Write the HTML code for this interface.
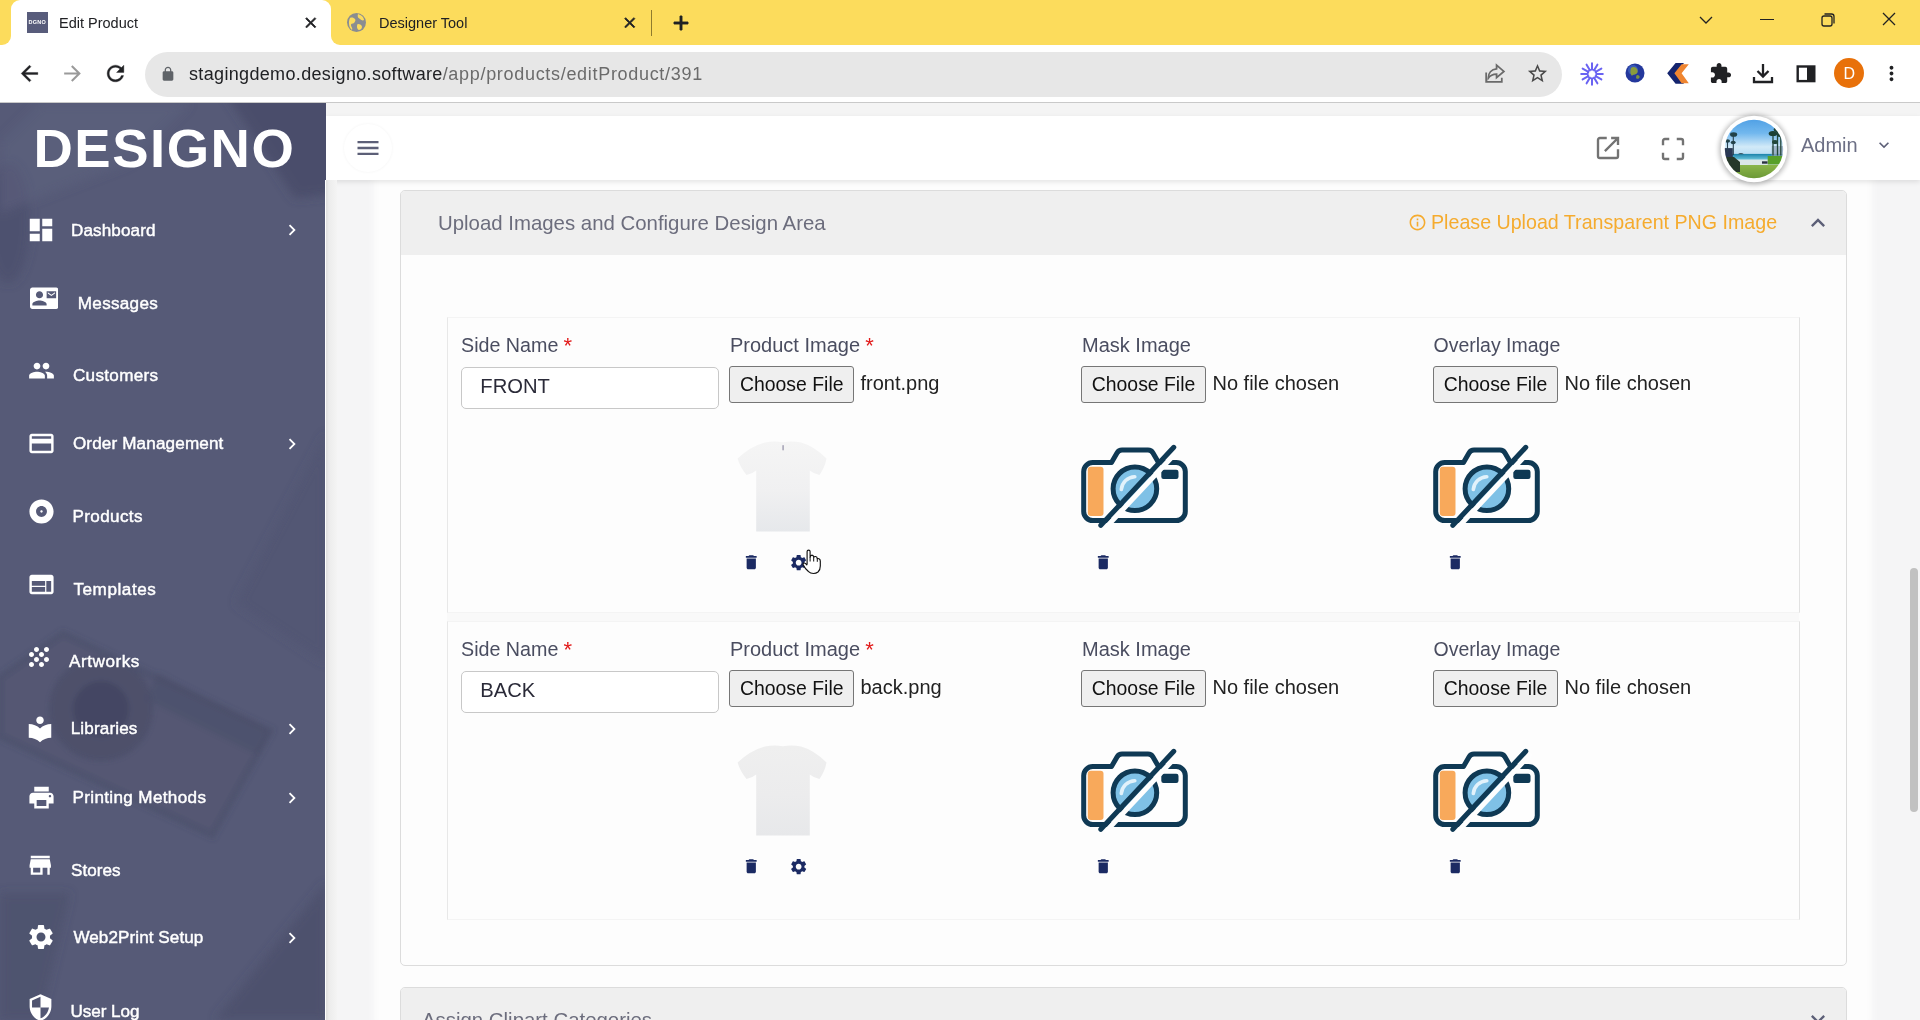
<!DOCTYPE html>
<html lang="en">
<head>
<meta charset="utf-8">
<title>Edit Product</title>
<style>
*{box-sizing:border-box;margin:0;padding:0}
html,body{width:1920px;height:1020px;overflow:hidden;background:#f5f5f6;font-family:"Liberation Sans",sans-serif;}
.abs{position:absolute}
#root{position:relative;width:1920px;height:1020px;overflow:hidden;will-change:transform}
#tabstrip{left:0;top:0;width:1920px;height:45px;background:#fcdc5c}
#toolbar{left:0;top:45px;width:1920px;height:57px;background:#fff}
#chromeline{left:0;top:102px;width:1920px;height:1px;background:#c9c9c9}
#omni{left:145px;top:51.500px;width:1417px;height:45px;border-radius:22.500px;background:#e7e7e7}
#tab1{left:11px;top:0;width:320px;height:45px;background:#fff;border-radius:9px 9px 0 0}
.tcurve{width:9px;height:9px;top:36px;background:#fff}
.tcurve i{position:absolute;left:0;top:0;width:9px;height:9px;background:#fcdc5c;display:block}
.t{position:absolute;white-space:nowrap}
#sidebar{left:0;top:103px;width:326px;height:917px;background:#565a77;overflow:hidden}
#sbshadow{left:325px;top:180px;width:12px;height:840px;background:linear-gradient(90deg,#fff 0,#fff 1px,#dedede 1px,#ececec 4px,#f4f4f4 12px)}
#strip{left:326px;top:103px;width:1594px;height:13px;background:#f4f4f4}
#header{left:326px;top:116px;width:1594px;height:64px;background:#fff;box-shadow:0 2px 5px rgba(0,0,0,.10)}
#card{left:380px;top:180px;width:1486px;height:840px;background:#fdfdfd;box-shadow:0 0 7px 6px #fdfdfd}
.panel{border:1px solid #dcdcdc;border-radius:5px;background:#fdfdfd;overflow:hidden}
.phead{background:#efefef;left:0;top:0;width:100%}
.fbtn{background:#efefef;border:1px solid #767676;border-radius:3px;height:37px;width:124px}
.inp{border:1px solid #c8c8c8;border-radius:5px;background:#fff;height:42px;width:258px}
.siderow{border:1px solid #f4f4f4;border-right-color:#e2e2e2;border-left-color:#e8e8e8;background:#fdfdfd}
</style>
</head>
<body>
<div id="root">

<div id="tabstrip" class="abs"></div>
<div id="toolbar" class="abs"></div>
<div id="tab1" class="abs"></div>
<div class="abs tcurve" style="left:2px"><i style="border-radius:0 0 9px 0"></i></div>
<div class="abs tcurve" style="left:331px"><i style="border-radius:0 0 0 9px"></i></div>
<div id="chromeline" class="abs"></div>
<div id="omni" class="abs"></div>
<div class="abs" style="left:27px;top:12px;width:21px;height:21px;background:#585c7b"></div>
<div class="t" style="left:28.5px;top:18.5px;font-size:5.5px;line-height:7px;color:#fff;font-weight:bold;letter-spacing:0.3px;">DGNO</div>
<div class="t" style="left:59px;top:14.7px;font-size:14.5px;line-height:17px;color:#202124;font-weight:normal;letter-spacing:0px;">Edit Product</div>
<svg class="abs" style="left:301.8px;top:13.8px" width="17.5" height="17.5" viewBox="0 0 24 24"><path fill="#202124" d="M19 6.41L17.59 5 12 10.59 6.41 5 5 6.41 10.59 12 5 17.59 6.41 19 12 13.41 17.59 19 19 17.59 13.41 12z" stroke="#202124" stroke-width="1"/></svg>
<svg class="abs" style="left:346px;top:12px" width="21" height="21" viewBox="0 0 21 21"><circle cx="10.5" cy="10.5" r="9.5" fill="#8a8d91"/><path d="M4 6c2-1 4 0 5 1s0 3-1 4-3 0-3 2 2 3 1 5c-3-2-4-8-2-12zM12 2c3 1 6 3 6 6-1 1-3 0-4-1s-3-1-2-5zM12 12c2 0 4 1 4 3s-2 3-3 3-2-2-2-3 0-3 1-3z" fill="#fcdc5c"/></svg>
<div class="t" style="left:379px;top:14.7px;font-size:14.5px;line-height:17px;color:#202124;font-weight:normal;letter-spacing:0px;">Designer Tool</div>
<svg class="abs" style="left:621.2px;top:13.8px" width="17.5" height="17.5" viewBox="0 0 24 24"><path fill="#202124" d="M19 6.41L17.59 5 12 10.59 6.41 5 5 6.41 10.59 12 5 17.59 6.41 19 12 13.41 17.59 19 19 17.59 13.41 12z" stroke="#202124" stroke-width="1"/></svg>
<div class="abs" style="left:651px;top:10px;width:1px;height:26px;background:#8f7b2d"></div>
<svg class="abs" style="left:669.0px;top:10.5px" width="24" height="24" viewBox="0 0 24 24"><path fill="#202124" d="M19 13h-6v6h-2v-6H5v-2h6V5h2v6h6v2z" stroke="#202124" stroke-width=".9"/></svg>
<svg class="abs" style="left:1696px;top:10px" width="20" height="20" viewBox="0 0 20 20" fill="none" stroke="#222" stroke-width="1.3"><path d="M4 7l6 6 6-6"/></svg>
<div class="abs" style="left:1760px;top:19px;width:14px;height:1.3px;background:#222"></div>
<svg class="abs" style="left:1818px;top:10px" width="20" height="20" viewBox="0 0 20 20" fill="none" stroke="#222" stroke-width="1.3"><rect x="4" y="6" width="10" height="10" rx="2"/><path d="M6.500 4h7a2.500 2.500 0 0 1 2.500 2.500v7"/></svg>
<svg class="abs" style="left:1879px;top:9px" width="20" height="20" viewBox="0 0 20 20" fill="none" stroke="#222" stroke-width="1.3"><path d="M4 4l12 12M16 4L4 16"/></svg>
<svg class="abs" style="left:16.5px;top:60.5px" width="25" height="25" viewBox="0 0 24 24"><path fill="#202124" d="M20 11H7.83l5.59-5.59L12 4l-8 8 8 8 1.41-1.41L7.83 13H20v-2z" stroke="#202124" stroke-width=".35"/></svg>
<svg class="abs" style="left:59.5px;top:60.5px" width="25" height="25" viewBox="0 0 24 24"><path fill="#9a9a9a" d="M12 4l-1.41 1.41L16.17 11H4v2h12.17l-5.58 5.59L12 20l8-8z" /></svg>
<svg class="abs" style="left:102.5px;top:60.5px" width="25" height="25" viewBox="0 0 24 24"><path fill="#202124" d="M17.65 6.35C16.2 4.9 14.21 4 12 4c-4.42 0-7.99 3.58-7.99 8s3.57 8 7.99 8c3.73 0 6.84-2.55 7.73-6h-2.08c-.82 2.33-3.04 4-5.65 4-3.31 0-6-2.69-6-6s2.69-6 6-6c1.66 0 3.14.69 4.22 1.78L13 11h7V4l-2.35 2.35z" stroke="#202124" stroke-width=".35"/></svg>
<svg class="abs" style="left:160.0px;top:66.0px" width="16" height="16" viewBox="0 0 24 24"><path fill="#5f6368" d="M18 8h-1V6c0-2.76-2.24-5-5-5S7 3.240 7 6v2H6c-1.100 0-2 .9-2 2v10c0 1.100.9 2 2 2h12c1.100 0 2-.9 2-2V10c0-1.100-.9-2-2-2zm-2.900 0H8.900V6c0-1.710 1.390-3.100 3.100-3.100 1.710 0 3.100 1.390 3.100 3.100v2z" /></svg>
<div class="t" style="left:189px;top:63.200px;font-size:18px;line-height:22px;color:#202124;letter-spacing:0.340px">stagingdemo.designo.software<span style="color:#6b6b6b;letter-spacing:0.690px">/app/products/editProduct/391</span></div>
<svg class="abs" style="left:1482px;top:61px" width="25" height="25" viewBox="0 0 24 24" fill="none" stroke="#6a6a6a" stroke-width="1.700"><path d="M4 11v9h15v-4"/><path d="M14 4l7 6-7 6v-3.500c-4 0-6 1-8 4 0-5 3-8.500 8-9z"/></svg>
<svg class="abs" style="left:1525.5px;top:61.5px" width="23" height="23" viewBox="0 0 24 24"><path fill="#4a4a4a" d="M22 9.24l-7.19-.62L12 2 9.19 8.63 2 9.24l5.46 4.73L5.82 21 12 17.27 18.18 21l-1.63-7.03L22 9.24zM12 15.4l-3.76 2.27 1-4.28-3.32-2.88 4.38-.38L12 6.1l1.71 4.04 4.38.38-3.32 2.88 1 4.28L12 15.4z" /></svg>
<svg class="abs" style="left:1580px;top:61.500px" width="24" height="24" viewBox="0 0 24 24"><path d="M16.20 12.00L22.80 12.00M15.64 14.10L21.35 17.40M14.10 15.64L17.40 21.35M12.00 16.20L12.00 22.80M9.90 15.64L6.60 21.35M8.36 14.10L2.65 17.40M7.80 12.00L1.20 12.00M8.36 9.90L2.65 6.60M9.90 8.36L6.60 2.65M12.00 7.80L12.00 1.20M14.10 8.36L17.40 2.65M15.64 9.90L21.35 6.60" stroke="#6a63f2" stroke-width="2" stroke-linecap="round" fill="none"/><circle cx="12" cy="12" r="4.600" fill="none" stroke="#6a63f2" stroke-width="1.400"/></svg>
<svg class="abs" style="left:1625px;top:63px" width="20" height="20" viewBox="0 0 20 20"><circle cx="10" cy="10" r="9.500" fill="#24389c"/><circle cx="8" cy="7" r="5" fill="#4a78d0" opacity=".55"/><path d="M6 5c2-2 5-1 6 1s1 4-1 5-3 0-4 2c-2-2-2-5-1-8z" fill="#8a9c3c"/><path d="M12 12c2 0 3 1 2.500 2.500s-2 1.500-3 1 0-3.500 .5-3.500z" fill="#7d9440"/></svg>
<svg class="abs" style="left:1666px;top:62px" width="24" height="23" viewBox="0 0 24 23"><path d="M1.200 11.300L9.600 1H18L9.600 11.300 18 21.800H9.600z" fill="#14246e"/><path d="M8.400 11.300L15.600 2.200H22.800L15.600 11.300 22.800 21.300H15.600z" fill="#ef8530"/></svg>
<svg class="abs" style="left:1708.5px;top:61.5px" width="23" height="23" viewBox="0 0 24 24"><path fill="#202124" d="M20.5 11H19V7c0-1.1-.9-2-2-2h-4V3.5C13 2.12 11.88 1 10.5 1S8 2.12 8 3.5V5H4c-1.1 0-1.99.9-1.99 2v3.8H3.5c1.49 0 2.7 1.21 2.7 2.7s-1.21 2.7-2.7 2.7H2V20c0 1.1.9 2 2 2h3.8v-1.5c0-1.49 1.21-2.7 2.7-2.7 1.49 0 2.7 1.21 2.7 2.7V22H17c1.1 0 2-.9 2-2v-4h1.5c1.38 0 2.5-1.12 2.5-2.5S21.88 11 20.5 11z" /></svg>
<svg class="abs" style="left:1751px;top:61px" width="24" height="24" viewBox="0 0 24 24" fill="none" stroke="#202124" stroke-width="2.300"><path d="M12 3v12M6.500 10l5.500 5.500 5.500-5.500M3 16v5h18v-5"/></svg>
<svg class="abs" style="left:1796px;top:65px" width="20" height="18" viewBox="0 0 20 18"><rect x="1.700" y="1.500" width="16.600" height="14.600" fill="#fff" stroke="#202124" stroke-width="2.400"/><rect x="11" y="1" width="8" height="16" fill="#202124"/></svg>
<div class="abs" style="left:1834px;top:58px;width:30px;height:30px;border-radius:50%;background:#e8710a"></div>
<div class="t" style="left:1843.5px;top:64.0px;font-size:16px;line-height:19px;color:#fff;font-weight:normal;letter-spacing:0px;">D</div>
<svg class="abs" style="left:1879.5px;top:61.5px" width="23" height="23" viewBox="0 0 24 24"><path fill="#202124" d="M12 8c1.1 0 2-.9 2-2s-.9-2-2-2-2 .9-2 2 .9 2 2 2zm0 2c-1.1 0-2 .9-2 2s.9 2 2 2 2-.9 2-2-.9-2-2-2zm0 6c-1.1 0-2 .9-2 2s.9 2 2 2 2-.9 2-2-.9-2-2-2z" /></svg>
<div id="strip" class="abs"></div>
<div id="card" class="abs"></div>
<div class="abs panel" style="left:400px;top:190px;width:1447px;height:776px"><div class="abs phead" style="height:64px"></div></div>
<div class="t" style="left:438px;top:210.5px;font-size:20.4px;line-height:24px;color:#6c6d7d;font-weight:normal;letter-spacing:0px;">Upload Images and Configure Design Area</div>
<svg class="abs" style="left:1408.0px;top:212.5px" width="19" height="19" viewBox="0 0 24 24"><path fill="#f5ab2e" d="M11 17h2v-6h-2v6zm1-15C6.48 2 2 6.48 2 12s4.48 10 10 10 10-4.48 10-10S17.52 2 12 2zm0 18c-4.41 0-8-3.59-8-8s3.59-8 8-8 8 3.590 8 8-3.590 8-8 8zM11 9h2V7h-2v2z" /></svg>
<div class="t" style="left:1431px;top:210.0px;font-size:19.65px;line-height:24px;color:#f5ab2e;font-weight:normal;letter-spacing:0px;">Please Upload Transparent PNG Image</div>
<svg class="abs" style="left:1804.0px;top:209.0px" width="28" height="28" viewBox="0 0 24 24"><path fill="#5c5f77" d="M12 8l-6 6 1.41 1.41L12 10.83l4.59 4.58L18 14z" /></svg>
<div class="abs" style="left:447px;top:613px;width:1352px;height:8px;background:#f9f9f9"></div>
<div class="abs siderow" style="left:446.500px;top:317px;width:1353.500px;height:296px"></div>
<div class="t" style="left:461px;top:333.0px;font-size:19.7px;line-height:24px;color:#4a4d60;font-weight:normal;letter-spacing:0px;">Side Name</div>
<div class="t" style="left:563.6px;top:333.3px;font-size:22px;line-height:26px;color:#e21b1b;font-weight:normal;letter-spacing:0px;">*</div>
<div class="abs inp" style="left:461px;top:367px"></div>
<div class="t" style="left:480.3px;top:374.0px;font-size:20.2px;line-height:24px;color:#2a2a38;font-weight:normal;letter-spacing:0px;">FRONT</div>
<div class="t" style="left:730px;top:333.0px;font-size:20px;line-height:24px;color:#4a4d60;font-weight:normal;letter-spacing:0px;">Product Image</div>
<div class="t" style="left:865.2px;top:333.3px;font-size:22px;line-height:26px;color:#e21b1b;font-weight:normal;letter-spacing:0px;">*</div>
<div class="abs fbtn" style="left:729.3px;top:366px;width:124.700px"></div>
<div class="t" style="left:740px;top:372.5px;font-size:19.4px;line-height:23px;color:#111;font-weight:normal;letter-spacing:0px;">Choose File</div>
<div class="t" style="left:860.5px;top:370.7px;font-size:20px;line-height:24px;color:#222;font-weight:normal;letter-spacing:0px;">front.png</div>
<div class="abs fbtn" style="left:1081.1px;top:366px;width:124.700px"></div>
<div class="t" style="left:1091.8px;top:372.5px;font-size:19.4px;line-height:23px;color:#111;font-weight:normal;letter-spacing:0px;">Choose File</div>
<div class="t" style="left:1212.5px;top:370.7px;font-size:20px;line-height:24px;color:#222;font-weight:normal;letter-spacing:0px;">No file chosen</div>
<div class="abs fbtn" style="left:1433.1px;top:366px;width:124.700px"></div>
<div class="t" style="left:1443.8px;top:372.5px;font-size:19.4px;line-height:23px;color:#111;font-weight:normal;letter-spacing:0px;">Choose File</div>
<div class="t" style="left:1564.5px;top:370.7px;font-size:20px;line-height:24px;color:#222;font-weight:normal;letter-spacing:0px;">No file chosen</div>
<div class="t" style="left:1082px;top:333.0px;font-size:20px;line-height:24px;color:#4a4d60;font-weight:normal;letter-spacing:0px;">Mask Image</div>
<div class="t" style="left:1433.5px;top:333.5px;font-size:19.5px;line-height:23px;color:#4a4d60;font-weight:normal;letter-spacing:0px;">Overlay Image</div>
<svg class="abs" style="left:734px;top:438px" width="96" height="98" viewBox="0 0 96 98">
<defs><linearGradient id="tg0" x1="0" y1="0" x2="0" y2="1"><stop offset="0" stop-color="#f5f5f5"/><stop offset=".55" stop-color="#f0f0f1"/><stop offset="1" stop-color="#e6e8eb"/></linearGradient></defs>
<path d="M31 4.500Q40 2.500 49 4.200Q58 2.500 67 4.500Q80 8 92.500 20.500Q91 29 85.500 37Q80 36 75.800 32.500L75.800 93.500H22.200V32.500Q18 36 12.500 37Q6 29 3.600 20.500Q17 8 31 4.500z" fill="url(#tg0)"/>
<rect x="48.300" y="7" width="1.600" height="5.500" rx=".8" fill="#a9a6b8"/>
</svg>
<svg class="abs" style="left:1081px;top:443px" width="108" height="86" viewBox="0 0 108 86">
<path d="M11.700 19.600H30.500L36 10Q37.700 7.100 41 7.100H67Q70.300 7.100 72 10L77.500 19.600H95.300a9 9 0 0 1 9 9V68.500a9 9 0 0 1-9 9H11.700a9 9 0 0 1-9-9V28.600a9 9 0 0 1 9-9z" fill="#fefefe" stroke="#0f3954" stroke-width="5" stroke-linejoin="round"/>
<rect x="6.800" y="23.800" width="15.700" height="49.200" rx="3" fill="#f8a95b"/>
<circle cx="53.900" cy="45.800" r="21.800" fill="#7fc1e6" stroke="#0f3954" stroke-width="5"/>
<path d="M40.300 46.500a14 14 0 0 1 13.500-12.800" fill="none" stroke="#e2f2fb" stroke-width="3.600" stroke-linecap="round"/>
<rect x="80.300" y="26.700" width="17.200" height="9.300" rx="2.200" fill="#0f3954"/>
<path d="M24 85.500L98 6.500" stroke="#fefefe" stroke-width="5"/>
<path d="M19.800 82.300L92.800 4.300" stroke="#0f3954" stroke-width="5" stroke-linecap="round"/>
</svg>
<svg class="abs" style="left:1433px;top:443px" width="108" height="86" viewBox="0 0 108 86">
<path d="M11.700 19.600H30.500L36 10Q37.700 7.100 41 7.100H67Q70.300 7.100 72 10L77.500 19.600H95.300a9 9 0 0 1 9 9V68.500a9 9 0 0 1-9 9H11.700a9 9 0 0 1-9-9V28.600a9 9 0 0 1 9-9z" fill="#fefefe" stroke="#0f3954" stroke-width="5" stroke-linejoin="round"/>
<rect x="6.800" y="23.800" width="15.700" height="49.200" rx="3" fill="#f8a95b"/>
<circle cx="53.900" cy="45.800" r="21.800" fill="#7fc1e6" stroke="#0f3954" stroke-width="5"/>
<path d="M40.300 46.500a14 14 0 0 1 13.500-12.800" fill="none" stroke="#e2f2fb" stroke-width="3.600" stroke-linecap="round"/>
<rect x="80.300" y="26.700" width="17.200" height="9.300" rx="2.200" fill="#0f3954"/>
<path d="M24 85.500L98 6.500" stroke="#fefefe" stroke-width="5"/>
<path d="M19.800 82.300L92.800 4.300" stroke="#0f3954" stroke-width="5" stroke-linecap="round"/>
</svg>
<svg class="abs" style="left:741.6px;top:552.5px" width="18.5" height="18.5" viewBox="0 0 24 24"><path fill="#1b2a63" d="M6 19c0 1.1.9 2 2 2h8c1.1 0 2-.9 2-2V7H6v12zM19 4h-3.5l-1-1h-5l-1 1H5v2h14V4z" /></svg>
<svg class="abs" style="left:1093.8px;top:552.5px" width="18.5" height="18.5" viewBox="0 0 24 24"><path fill="#1b2a63" d="M6 19c0 1.1.9 2 2 2h8c1.1 0 2-.9 2-2V7H6v12zM19 4h-3.5l-1-1h-5l-1 1H5v2h14V4z" /></svg>
<svg class="abs" style="left:1445.8px;top:552.5px" width="18.5" height="18.5" viewBox="0 0 24 24"><path fill="#1b2a63" d="M6 19c0 1.1.9 2 2 2h8c1.1 0 2-.9 2-2V7H6v12zM19 4h-3.5l-1-1h-5l-1 1H5v2h14V4z" /></svg>
<svg class="abs" style="left:788.9px;top:552.6px" width="19.3" height="19.3" viewBox="0 0 24 24"><path fill="#1b2a63" d="M19.14 12.94c.04-.3.06-.61.06-.94 0-.32-.02-.64-.07-.94l2.03-1.58c.18-.14.23-.41.12-.61l-1.92-3.32c-.12-.22-.37-.29-.59-.22l-2.39.96c-.5-.38-1.03-.7-1.62-.94l-.36-2.54c-.04-.24-.24-.41-.48-.41h-3.84c-.24 0-.43.17-.47.41l-.36 2.54c-.59.24-1.13.57-1.62.94l-2.39-.96c-.22-.08-.47 0-.59.22L2.74 8.87c-.12.21-.08.47.12.61l2.03 1.58c-.05.3-.09.63-.09.94s.02.64.07.94l-2.03 1.58c-.18.14-.23.41-.12.61l1.92 3.32c.12.22.37.29.59.22l2.39-.96c.5.38 1.03.7 1.62.94l.36 2.54c.05.24.24.41.48.41h3.84c.24 0 .44-.17.47-.41l.36-2.54c.59-.24 1.13-.56 1.62-.94l2.39.96c.22.08.47 0 .59-.22l1.92-3.32c.12-.22.07-.47-.12-.61l-2.01-1.58zM12 15.6c-1.98 0-3.6-1.62-3.6-3.6s1.62-3.6 3.6-3.6 3.6 1.62 3.6 3.6-1.62 3.6-3.6 3.6z" /></svg>
<div class="abs siderow" style="left:446.500px;top:621px;width:1353.500px;height:299px"></div>
<div class="t" style="left:461px;top:637.0px;font-size:19.7px;line-height:24px;color:#4a4d60;font-weight:normal;letter-spacing:0px;">Side Name</div>
<div class="t" style="left:563.6px;top:637.3px;font-size:22px;line-height:26px;color:#e21b1b;font-weight:normal;letter-spacing:0px;">*</div>
<div class="abs inp" style="left:461px;top:671px"></div>
<div class="t" style="left:480.3px;top:678.0px;font-size:20.2px;line-height:24px;color:#2a2a38;font-weight:normal;letter-spacing:0px;">BACK</div>
<div class="t" style="left:730px;top:637.0px;font-size:20px;line-height:24px;color:#4a4d60;font-weight:normal;letter-spacing:0px;">Product Image</div>
<div class="t" style="left:865.2px;top:637.3px;font-size:22px;line-height:26px;color:#e21b1b;font-weight:normal;letter-spacing:0px;">*</div>
<div class="abs fbtn" style="left:729.3px;top:670px;width:124.700px"></div>
<div class="t" style="left:740px;top:676.5px;font-size:19.4px;line-height:23px;color:#111;font-weight:normal;letter-spacing:0px;">Choose File</div>
<div class="t" style="left:860.5px;top:674.7px;font-size:20px;line-height:24px;color:#222;font-weight:normal;letter-spacing:0px;">back.png</div>
<div class="abs fbtn" style="left:1081.1px;top:670px;width:124.700px"></div>
<div class="t" style="left:1091.8px;top:676.5px;font-size:19.4px;line-height:23px;color:#111;font-weight:normal;letter-spacing:0px;">Choose File</div>
<div class="t" style="left:1212.5px;top:674.7px;font-size:20px;line-height:24px;color:#222;font-weight:normal;letter-spacing:0px;">No file chosen</div>
<div class="abs fbtn" style="left:1433.1px;top:670px;width:124.700px"></div>
<div class="t" style="left:1443.8px;top:676.5px;font-size:19.4px;line-height:23px;color:#111;font-weight:normal;letter-spacing:0px;">Choose File</div>
<div class="t" style="left:1564.5px;top:674.7px;font-size:20px;line-height:24px;color:#222;font-weight:normal;letter-spacing:0px;">No file chosen</div>
<div class="t" style="left:1082px;top:637.0px;font-size:20px;line-height:24px;color:#4a4d60;font-weight:normal;letter-spacing:0px;">Mask Image</div>
<div class="t" style="left:1433.5px;top:637.5px;font-size:19.5px;line-height:23px;color:#4a4d60;font-weight:normal;letter-spacing:0px;">Overlay Image</div>
<svg class="abs" style="left:734px;top:742px" width="96" height="98" viewBox="0 0 96 98">
<defs><linearGradient id="tg304" x1="0" y1="0" x2="0" y2="1"><stop offset="0" stop-color="#efefef"/><stop offset=".55" stop-color="#ececed"/><stop offset="1" stop-color="#e7e8ea"/></linearGradient></defs>
<path d="M31 4.500Q40 2.500 49 4.200Q58 2.500 67 4.500Q80 8 92.500 20.500Q91 29 85.500 37Q80 36 75.800 32.500L75.800 93.500H22.200V32.500Q18 36 12.500 37Q6 29 3.600 20.500Q17 8 31 4.500z" fill="url(#tg304)"/>

</svg>
<svg class="abs" style="left:1081px;top:747px" width="108" height="86" viewBox="0 0 108 86">
<path d="M11.700 19.600H30.500L36 10Q37.700 7.100 41 7.100H67Q70.300 7.100 72 10L77.500 19.600H95.300a9 9 0 0 1 9 9V68.500a9 9 0 0 1-9 9H11.700a9 9 0 0 1-9-9V28.600a9 9 0 0 1 9-9z" fill="#fefefe" stroke="#0f3954" stroke-width="5" stroke-linejoin="round"/>
<rect x="6.800" y="23.800" width="15.700" height="49.200" rx="3" fill="#f8a95b"/>
<circle cx="53.900" cy="45.800" r="21.800" fill="#7fc1e6" stroke="#0f3954" stroke-width="5"/>
<path d="M40.300 46.500a14 14 0 0 1 13.500-12.800" fill="none" stroke="#e2f2fb" stroke-width="3.600" stroke-linecap="round"/>
<rect x="80.300" y="26.700" width="17.200" height="9.300" rx="2.200" fill="#0f3954"/>
<path d="M24 85.500L98 6.500" stroke="#fefefe" stroke-width="5"/>
<path d="M19.800 82.300L92.800 4.300" stroke="#0f3954" stroke-width="5" stroke-linecap="round"/>
</svg>
<svg class="abs" style="left:1433px;top:747px" width="108" height="86" viewBox="0 0 108 86">
<path d="M11.700 19.600H30.500L36 10Q37.700 7.100 41 7.100H67Q70.300 7.100 72 10L77.500 19.600H95.300a9 9 0 0 1 9 9V68.500a9 9 0 0 1-9 9H11.700a9 9 0 0 1-9-9V28.600a9 9 0 0 1 9-9z" fill="#fefefe" stroke="#0f3954" stroke-width="5" stroke-linejoin="round"/>
<rect x="6.800" y="23.800" width="15.700" height="49.200" rx="3" fill="#f8a95b"/>
<circle cx="53.900" cy="45.800" r="21.800" fill="#7fc1e6" stroke="#0f3954" stroke-width="5"/>
<path d="M40.300 46.500a14 14 0 0 1 13.500-12.800" fill="none" stroke="#e2f2fb" stroke-width="3.600" stroke-linecap="round"/>
<rect x="80.300" y="26.700" width="17.200" height="9.300" rx="2.200" fill="#0f3954"/>
<path d="M24 85.500L98 6.500" stroke="#fefefe" stroke-width="5"/>
<path d="M19.800 82.300L92.800 4.300" stroke="#0f3954" stroke-width="5" stroke-linecap="round"/>
</svg>
<svg class="abs" style="left:741.6px;top:856.5px" width="18.5" height="18.5" viewBox="0 0 24 24"><path fill="#1b2a63" d="M6 19c0 1.1.9 2 2 2h8c1.1 0 2-.9 2-2V7H6v12zM19 4h-3.5l-1-1h-5l-1 1H5v2h14V4z" /></svg>
<svg class="abs" style="left:1093.8px;top:856.5px" width="18.5" height="18.5" viewBox="0 0 24 24"><path fill="#1b2a63" d="M6 19c0 1.1.9 2 2 2h8c1.1 0 2-.9 2-2V7H6v12zM19 4h-3.5l-1-1h-5l-1 1H5v2h14V4z" /></svg>
<svg class="abs" style="left:1445.8px;top:856.5px" width="18.5" height="18.5" viewBox="0 0 24 24"><path fill="#1b2a63" d="M6 19c0 1.1.9 2 2 2h8c1.1 0 2-.9 2-2V7H6v12zM19 4h-3.5l-1-1h-5l-1 1H5v2h14V4z" /></svg>
<svg class="abs" style="left:788.9px;top:856.6px" width="19.3" height="19.3" viewBox="0 0 24 24"><path fill="#1b2a63" d="M19.14 12.94c.04-.3.06-.61.06-.94 0-.32-.02-.64-.07-.94l2.03-1.58c.18-.14.23-.41.12-.61l-1.92-3.32c-.12-.22-.37-.29-.59-.22l-2.39.96c-.5-.38-1.03-.7-1.62-.94l-.36-2.54c-.04-.24-.24-.41-.48-.41h-3.84c-.24 0-.43.17-.47.41l-.36 2.54c-.59.24-1.13.57-1.62.94l-2.39-.96c-.22-.08-.47 0-.59.22L2.74 8.87c-.12.21-.08.47.12.61l2.03 1.58c-.05.3-.09.63-.09.94s.02.64.07.94l-2.03 1.58c-.18.14-.23.41-.12.61l1.92 3.32c.12.22.37.29.59.22l2.39-.96c.5.38 1.03.7 1.62.94l.36 2.54c.05.24.24.41.48.41h3.84c.24 0 .44-.17.47-.41l.36-2.54c.59-.24 1.13-.56 1.62-.94l2.39.96c.22.08.47 0 .59-.22l1.92-3.32c.12-.22.07-.47-.12-.61l-2.01-1.58zM12 15.6c-1.98 0-3.6-1.62-3.6-3.6s1.62-3.6 3.6-3.6 3.6 1.62 3.6 3.6-1.62 3.6-3.6 3.6z" /></svg>
<svg class="abs" style="left:801.200px;top:549.400px" width="22" height="27" viewBox="0 0 22 27"><path d="M6.100 15V2.600a1.500 1.500 0 0 1 3 0V8.500Q9.300 6.200 11 6.100Q12.600 6.100 12.700 8.200Q13.100 7.400 14.500 7.500Q16.200 7.700 16.300 9.600Q16.900 9.300 18 9.700Q19.300 10.300 19.300 12V17Q19.300 21 17 23Q15 24.500 12.500 24.500Q9.500 24.500 7.200 22.300Q4 19.500 2.300 16Q1.600 14.300 3 14Q4.300 13.800 5.800 15.800z" fill="#fff" stroke="#111" stroke-width="1.150" stroke-linejoin="round"/><path d="M9.100 8.500V12.500M12.700 8.200V12.500M16.300 9.600V12.800" stroke="#111" stroke-width="1" fill="none"/></svg>
<div class="abs panel" style="left:400px;top:987px;width:1447px;height:80px"><div class="abs phead" style="height:64px"></div></div>
<div class="t" style="left:422px;top:1007.5px;font-size:20.4px;line-height:24px;color:#6c6d7d;font-weight:normal;letter-spacing:0px;">Assign Clipart Categories</div>
<svg class="abs" style="left:1804.0px;top:1005.0px" width="28" height="28" viewBox="0 0 24 24"><path fill="#5c5f77" d="M16.59 8.59L12 13.17 7.41 8.59 6 10l6 6 6-6z" /></svg>
<div id="header" class="abs"></div>
<div class="abs" style="left:344px;top:124px;width:48px;height:48px;border-radius:50%;background:#fff;box-shadow:0 0 3px rgba(0,0,0,.05)"></div>
<svg class="abs" style="left:354.0px;top:134.0px" width="28" height="28" viewBox="0 0 24 24"><path fill="#5c5f77" d="M3 18h18v-2H3v2zm0-5h18v-2H3v2zm0-7v2h18V6H3z" /></svg>
<svg class="abs" style="left:1593.300px;top:133.200px" width="30" height="30" viewBox="0 0 24 24" fill="none" stroke="#737373" stroke-width="1.900"><path d="M11 4H5.500a1.500 1.500 0 0 0-1.500 1.500v13a1.500 1.500 0 0 0 1.500 1.500h13a1.500 1.500 0 0 0 1.500-1.500V13M14.500 4H20v5.500M20 4L9.500 14.500"/></svg>
<svg class="abs" style="left:1658.300px;top:133.700px" width="30" height="30" viewBox="0 0 24 24" fill="none" stroke="#737373" stroke-width="1.900"><path d="M4 9V5.500A1.500 1.500 0 0 1 5.500 4H9M15 4h3.500A1.500 1.500 0 0 1 20 5.500V9M20 15v3.500a1.500 1.500 0 0 1-1.500 1.500H15M9 20H5.500A1.500 1.500 0 0 1 4 18.500V15"/></svg>
<svg class="abs" style="left:1717.100px;top:112.300px;overflow:visible" width="74" height="74" viewBox="0 0 74 74">
<defs><clipPath id="avc"><circle cx="37" cy="37" r="29.200"/></clipPath>
<linearGradient id="sky" x1="0" y1="0" x2="0" y2="1"><stop offset="0" stop-color="#3f94e0"/><stop offset=".5" stop-color="#72b8ee"/><stop offset=".82" stop-color="#d2eaf8"/><stop offset="1" stop-color="#b9ddf3"/></linearGradient>
<linearGradient id="sea" x1="0" y1="0" x2="0" y2="1"><stop offset="0" stop-color="#1b82aa"/><stop offset="1" stop-color="#70c8de"/></linearGradient>
<linearGradient id="lawn" x1="0" y1="0" x2="0" y2="1"><stop offset="0" stop-color="#8ab548"/><stop offset="1" stop-color="#5b882c"/></linearGradient>
<filter id="avb" x="-10%" y="-10%" width="120%" height="120%"><feGaussianBlur stdDeviation=".700"/></filter>
<filter id="avs" x="-20%" y="-20%" width="140%" height="140%"><feGaussianBlur stdDeviation="2.400"/></filter></defs>
<circle cx="37" cy="37.500" r="35" fill="#000" opacity=".26" filter="url(#avs)"/>
<circle cx="37" cy="37" r="33.200" fill="#fff"/>
<g clip-path="url(#avc)"><g filter="url(#avb)">
<rect x="0" y="0" width="74" height="42.500" fill="url(#sky)"/>
<rect x="0" y="41.900" width="74" height="6" fill="url(#sea)"/>
<rect x="0" y="47.600" width="74" height="6" fill="#dbe6e6"/>
<rect x="0" y="53" width="74" height="21" fill="url(#lawn)"/>
<rect x="54.700" y="34" width="12" height="10.500" fill="#8fa3b8" opacity=".75"/>
<rect x="50.700" y="44" width="20" height="8.500" fill="#58a02b"/>
<rect x="45" y="49.300" width="5.500" height="2.400" fill="#2a3340"/>
<path d="M56 20.500V43.500M60.500 17V43.500M63.800 22V43.500" stroke="#24463a" stroke-width="1.300"/>
<ellipse cx="56" cy="21.500" rx="4.300" ry="2.600" fill="#1f4034"/><ellipse cx="61" cy="17.500" rx="4.300" ry="2.600" fill="#1f4034"/><ellipse cx="64" cy="23" rx="3.500" ry="2.200" fill="#1f4034"/><ellipse cx="58" cy="30" rx="3" ry="2" fill="#24463a"/>
<rect x="7" y="36.100" width="8.800" height="10" fill="#2b3954"/>
<path d="M6 45h11l6 5v10H9z" fill="#26382a"/>
<path d="M16.300 22.500V43M10.500 29V40" stroke="#2a4150" stroke-width="1.100"/>
<ellipse cx="16.600" cy="22.500" rx="3.600" ry="2.300" fill="#23424a"/><ellipse cx="10.500" cy="29" rx="2.600" ry="1.800" fill="#23424a"/><ellipse cx="16.200" cy="30.500" rx="2.500" ry="1.700" fill="#23424a"/>
<path d="M20.800 42.200q3-2.400 6.200 0z" fill="#3b5560"/>
</g></g></svg>
<div class="t" style="left:1801px;top:133.0px;font-size:20px;line-height:24px;color:#6c6f85;font-weight:normal;letter-spacing:0px;">Admin</div>
<svg class="abs" style="left:1874.0px;top:134.5px" width="20" height="20" viewBox="0 0 24 24"><path fill="#5c5f77" d="M16.59 8.59L12 13.17 7.41 8.59 6 10l6 6 6-6z" /></svg>
<div id="sidebar" class="abs">
<svg class="abs" style="left:0;top:0" width="326" height="917" viewBox="0 0 326 917">
<defs><filter id="bl" x="-20%" y="-20%" width="140%" height="140%"><feGaussianBlur stdDeviation="5"/></filter><filter id="bl2" x="-20%" y="-20%" width="140%" height="140%"><feGaussianBlur stdDeviation="2.500"/></filter></defs>
<g filter="url(#bl)">
<path d="M225 -10h120v100l-50 5z" fill="#454967" opacity=".75"/>
<ellipse cx="8" cy="120" rx="22" ry="60" fill="#494d6a" opacity=".55"/>
<path d="M40 0h150l-60 60L0 110V40z" fill="#5d6180" opacity=".5"/>
<path d="M326 330v230l-90-60z" fill="#50546f" opacity=".5"/>
<path d="M0 790h70l-30 127H0z" fill="#454965" opacity=".4"/>
<path d="M326 780v137H215z" fill="#474b67" opacity=".6"/>
</g>
<g filter="url(#bl2)">
<path d="M63 531L270 628 212 732 0 633V575z" fill="#52566f" opacity=".45" stroke="#43475f" stroke-opacity=".7" stroke-width="7"/>
<path d="M158 570l112 58-12 24-112-56z" fill="#4a4e68" opacity=".5"/>
<circle cx="101" cy="606" r="52" fill="#4b4f6a" opacity=".75"/>
<circle cx="101" cy="606" r="28" fill="#414560" opacity=".7"/>
</g>
</svg>
</div>
<div id="sbshadow" class="abs"></div>
<div class="t" style="left:33.5px;top:115.8px;font-size:54.5px;line-height:65px;color:#fff;font-weight:bold;letter-spacing:1.5px;">DESIGNO</div>
<svg class="abs" style="left:25.6px;top:215.4px" width="30" height="30" viewBox="0 0 24 24"><path fill="#fff" d="M3 13h8V3H3v10zm0 8h8v-6H3v6zm10 0h8V11h-8v10zm0-18v6h8V3h-8z" /></svg>
<div class="t" style="left:71px;top:220.1px;font-size:17.1px;line-height:21px;color:#fff;font-weight:normal;letter-spacing:0.106px;-webkit-text-stroke:0.450px #fff">Dashboard</div>
<svg class="abs" style="left:280.8px;top:219.4px" width="22" height="22" viewBox="0 0 24 24"><path fill="#fff" d="M10 6L8.59 7.41 13.17 12l-4.58 4.59L10 18l6-6z" /></svg>
<svg class="abs" style="left:29.6px;top:284.2px" width="28.5" height="28.5" viewBox="0 0 24 24"><path fill="#fff" d="M21 8V7l-3 2-3-2v1l3 2 3-2zm1-5H2C.9 3 0 3.9 0 5v14c0 1.1.9 2 2 2h20c1.1 0 1.99-.9 1.99-2L24 5c0-1.1-.9-2-2-2zM8 6c1.66 0 3 1.34 3 3s-1.34 3-3 3-3-1.34-3-3 1.34-3 3-3zm6 12H2v-1c0-2 4-3.1 6-3.1s6 1.1 6 3.1v1zm8-6h-8V6h8v6z" /></svg>
<div class="t" style="left:77.8px;top:293.1px;font-size:17.1px;line-height:21px;color:#fff;font-weight:normal;letter-spacing:0.294px;-webkit-text-stroke:0.450px #fff">Messages</div>
<svg class="abs" style="left:28.0px;top:357.1px" width="27" height="27" viewBox="0 0 24 24"><path fill="#fff" d="M16 11c1.66 0 2.99-1.34 2.99-3S17.66 5 16 5c-1.66 0-3 1.34-3 3s1.34 3 3 3zm-8 0c1.66 0 2.99-1.34 2.99-3S9.66 5 8 5C6.34 5 5 6.34 5 8s1.34 3 3 3zm0 2c-2.33 0-7 1.17-7 3.5V19h14v-2.5c0-2.33-4.67-3.5-7-3.5zm8 0c-.29 0-.62.02-.97.05 1.16.84 1.97 1.97 1.97 3.45V19h6v-2.5c0-2.33-4.67-3.5-7-3.5z" /></svg>
<div class="t" style="left:72.9px;top:365.4px;font-size:17.1px;line-height:21px;color:#fff;font-weight:normal;letter-spacing:0.328px;-webkit-text-stroke:0.450px #fff">Customers</div>
<svg class="abs" style="left:27.0px;top:428.8px" width="29" height="29" viewBox="0 0 24 24"><path fill="#fff" d="M20 4H4c-1.11 0-1.99.89-1.99 2L2 18c0 1.11.89 2 2 2h16c1.11 0 2-.89 2-2V6c0-1.11-.89-2-2-2zm0 14H4v-6h16v6zm0-10H4V6h16v2z" /></svg>
<div class="t" style="left:72.9px;top:433.4px;font-size:17.1px;line-height:21px;color:#fff;font-weight:normal;letter-spacing:0.148px;-webkit-text-stroke:0.450px #fff">Order Management</div>
<svg class="abs" style="left:280.8px;top:432.7px" width="22" height="22" viewBox="0 0 24 24"><path fill="#fff" d="M10 6L8.59 7.41 13.17 12l-4.58 4.59L10 18l6-6z" /></svg>
<svg class="abs" style="left:27.0px;top:497.0px" width="29" height="29" viewBox="0 0 24 24"><path fill="#fff" d="M12 2C6.48 2 2 6.48 2 12s4.48 10 10 10 10-4.48 10-10S17.52 2 12 2zm0 14.5c-2.49 0-4.5-2.01-4.5-4.5S9.51 7.5 12 7.5s4.5 2.01 4.5 4.5-2.01 4.5-4.5 4.5zm0-5.5c-.55 0-1 .45-1 1s.45 1 1 1 1-.45 1-1-.45-1-1-1z" /></svg>
<div class="t" style="left:72.5px;top:506.0px;font-size:17.1px;line-height:21px;color:#fff;font-weight:normal;letter-spacing:0.36px;-webkit-text-stroke:0.450px #fff">Products</div>
<svg class="abs" style="left:27.0px;top:570.0px" width="29" height="29" viewBox="0 0 24 24"><path fill="#fff" d="M20 4H4c-1.1 0-1.99.9-1.99 2L2 18c0 1.1.9 2 2 2h16c1.1 0 2-.9 2-2V6c0-1.1-.9-2-2-2zm-5 14H4v-4h11v4zm0-5H4V9h11v4zm5 5h-4V9h4v9z" /></svg>
<div class="t" style="left:73.4px;top:579.3px;font-size:17.1px;line-height:21px;color:#fff;font-weight:normal;letter-spacing:0.57px;-webkit-text-stroke:0.450px #fff">Templates</div>
<svg class="abs" style="left:24.4px;top:641.5px" width="30" height="30" viewBox="0 0 24 24"><path fill="#fff" d="M10 12c-1.1 0-2 .9-2 2s.9 2 2 2 2-.9 2-2-.9-2-2-2zM6 8c-1.1 0-2 .9-2 2s.9 2 2 2 2-.9 2-2-.9-2-2-2zm0 8c-1.1 0-2 .9-2 2s.9 2 2 2 2-.9 2-2-.9-2-2-2zm12-8c1.1 0 2-.9 2-2s-.9-2-2-2-2 .9-2 2 .9 2 2 2zm-4 8c-1.1 0-2 .9-2 2s.9 2 2 2 2-.9 2-2-.9-2-2-2zm4-4c-1.1 0-2 .9-2 2s.9 2 2 2 2-.9 2-2-.9-2-2-2zm-4-4c-1.1 0-2 .9-2 2s.9 2 2 2 2-.9 2-2-.9-2-2-2zm-4-4c-1.1 0-2 .9-2 2s.9 2 2 2 2-.9 2-2-.9-2-2-2z" /></svg>
<div class="t" style="left:69px;top:651.4px;font-size:17.1px;line-height:21px;color:#fff;font-weight:normal;letter-spacing:0.557px;-webkit-text-stroke:0.450px #fff">Artworks</div>
<svg class="abs" style="left:25.3px;top:713.5px" width="30" height="30" viewBox="0 0 24 24"><path fill="#fff" d="M12 11.55C9.64 9.35 6.48 8 3 8v11c3.48 0 6.64 1.35 9 3.55 2.36-2.19 5.52-3.55 9-3.55V8c-3.48 0-6.64 1.35-9 3.55zM12 8c1.66 0 3-1.34 3-3s-1.34-3-3-3-3 1.34-3 3 1.34 3 3 3z" /></svg>
<div class="t" style="left:70.7px;top:718.2px;font-size:17.1px;line-height:21px;color:#fff;font-weight:normal;letter-spacing:0.14px;-webkit-text-stroke:0.450px #fff">Libraries</div>
<svg class="abs" style="left:280.8px;top:717.5px" width="22" height="22" viewBox="0 0 24 24"><path fill="#fff" d="M10 6L8.59 7.41 13.17 12l-4.58 4.59L10 18l6-6z" /></svg>
<svg class="abs" style="left:27.0px;top:782.5px" width="29" height="29" viewBox="0 0 24 24"><path fill="#fff" d="M19 8H5c-1.66 0-3 1.34-3 3v6h4v4h12v-4h4v-6c0-1.66-1.34-3-3-3zm-3 11H8v-5h8v5zm3-7c-.55 0-1-.45-1-1s.45-1 1-1 1 .45 1 1-.45 1-1 1zm-1-9H6v4h12V3z" /></svg>
<div class="t" style="left:72.5px;top:787.3px;font-size:17.1px;line-height:21px;color:#fff;font-weight:normal;letter-spacing:0.345px;-webkit-text-stroke:0.450px #fff">Printing Methods</div>
<svg class="abs" style="left:280.8px;top:786.6px" width="22" height="22" viewBox="0 0 24 24"><path fill="#fff" d="M10 6L8.59 7.41 13.17 12l-4.58 4.59L10 18l6-6z" /></svg>
<svg class="abs" style="left:26.0px;top:851.2px" width="28.5" height="28.5" viewBox="0 0 24 24"><path fill="#fff" d="M20 4H4v2h16V4zm1 10v-2l-1-5H4l-1 5v2h1v6h10v-6h4v6h2v-6h1zm-9 4H6v-4h6v4z" /></svg>
<div class="t" style="left:71px;top:860.2px;font-size:17.1px;line-height:21px;color:#fff;font-weight:normal;letter-spacing:0.036px;-webkit-text-stroke:0.450px #fff">Stores</div>
<svg class="abs" style="left:26.2px;top:922.2px" width="30" height="30" viewBox="0 0 24 24"><path fill="#fff" d="M19.14 12.94c.04-.3.06-.61.06-.94 0-.32-.02-.64-.07-.94l2.03-1.58c.18-.14.23-.41.12-.61l-1.92-3.32c-.12-.22-.37-.29-.59-.22l-2.39.96c-.5-.38-1.03-.7-1.62-.94l-.36-2.54c-.04-.24-.24-.41-.48-.41h-3.84c-.24 0-.43.17-.47.41l-.36 2.54c-.59.24-1.13.57-1.62.94l-2.39-.96c-.22-.08-.47 0-.59.22L2.74 8.87c-.12.21-.08.47.12.61l2.03 1.58c-.05.3-.09.63-.09.94s.02.64.07.94l-2.03 1.58c-.18.14-.23.41-.12.61l1.92 3.32c.12.22.37.29.59.22l2.39-.96c.5.38 1.03.7 1.62.94l.36 2.54c.05.24.24.41.48.41h3.84c.24 0 .44-.17.47-.41l.36-2.54c.59-.24 1.13-.56 1.62-.94l2.39.96c.22.08.47 0 .59-.22l1.92-3.32c.12-.22.07-.47-.12-.61l-2.01-1.58zM12 15.6c-1.98 0-3.6-1.62-3.6-3.6s1.62-3.6 3.6-3.6 3.6 1.62 3.6 3.6-1.62 3.6-3.6 3.6z" /></svg>
<div class="t" style="left:73.4px;top:927.2px;font-size:17.1px;line-height:21px;color:#fff;font-weight:normal;letter-spacing:0.074px;-webkit-text-stroke:0.450px #fff">Web2Print Setup</div>
<svg class="abs" style="left:280.8px;top:926.5px" width="22" height="22" viewBox="0 0 24 24"><path fill="#fff" d="M10 6L8.59 7.41 13.17 12l-4.58 4.59L10 18l6-6z" /></svg>
<svg class="abs" style="left:26.0px;top:992.7px" width="29" height="29" viewBox="0 0 24 24"><path fill="#fff" d="M12 1L3 5v6c0 5.55 3.84 10.74 9 12 5.16-1.26 9-6.45 9-12V5l-9-4zm0 10.990h7c-.53 4.120-3.280 7.790-7 8.940V12H5V6.300l7-3.110v8.800z" /></svg>
<div class="t" style="left:70.5px;top:1000.9px;font-size:17.1px;line-height:21px;color:#fff;font-weight:normal;letter-spacing:-0.056px;-webkit-text-stroke:0.450px #fff">User Log</div>
<div class="abs" style="left:1910px;top:568px;width:8px;height:244px;border-radius:4px;background:#c1c1c1"></div>
</div>
</body>
</html>
